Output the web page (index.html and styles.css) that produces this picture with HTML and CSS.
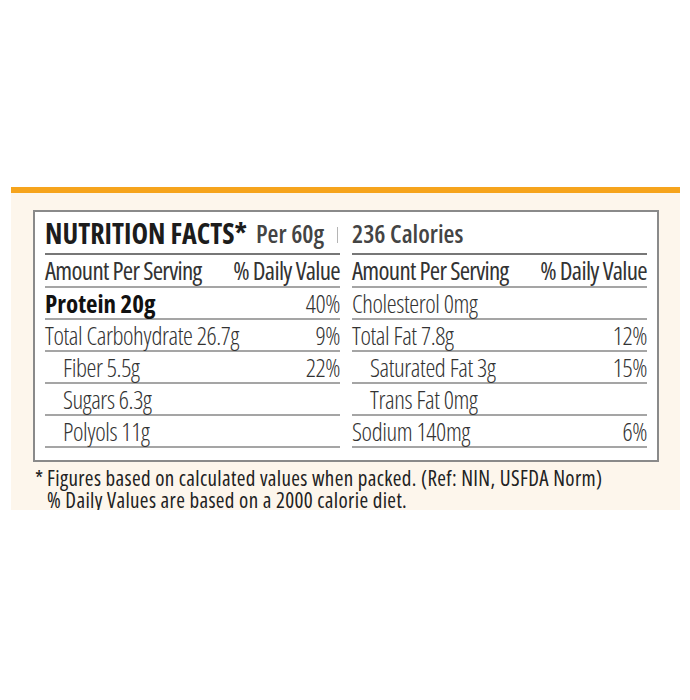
FILE: index.html
```html
<!DOCTYPE html>
<html>
<head>
<meta charset="utf-8">
<link rel="stylesheet" href="styles.css">
</head>
<body>
<div class="panel">
  <div class="box">
    <div class="col">
      <div class="title"><span class="big">NUTRITION FACTS*</span><span class="per">Per 60g</span><span class="sep"></span></div>
      <div class="row head"><span>Amount Per Serving</span><span>% Daily Value</span></div>
      <div class="row bold"><span>Protein 20g</span><span class="pct">40%</span></div>
      <div class="row"><span>Total Carbohydrate 26.7g</span><span>9%</span></div>
      <div class="row sub"><span>Fiber 5.5g</span><span>22%</span></div>
      <div class="row sub"><span>Sugars 6.3g</span><span></span></div>
      <div class="row sub"><span>Polyols 11g</span><span></span></div>
    </div>
    <div class="col">
      <div class="title"><span class="per">236 Calories</span></div>
      <div class="row head"><span>Amount Per Serving</span><span>% Daily Value</span></div>
      <div class="row"><span>Cholesterol 0mg</span><span></span></div>
      <div class="row"><span>Total Fat 7.8g</span><span>12%</span></div>
      <div class="row sub"><span>Saturated Fat 3g</span><span>15%</span></div>
      <div class="row sub"><span>Trans Fat 0mg</span><span></span></div>
      <div class="row"><span>Sodium 140mg</span><span>6%</span></div>
    </div>
  </div>
  <div class="note">
    <p><span class="star">*</span>Figures based on calculated values when packed. (Ref: NIN, USFDA Norm)</p>
    <p class="second">% Daily Values are based on a 2000 calorie diet.</p>
  </div>
</div>
</body>
</html>
```

FILE: styles.css
```css
* { box-sizing: border-box; }
body {
  margin: 0;
  background: #fff;
  font-family: "Open Sans", "Liberation Sans", sans-serif;
}
.panel {
  margin: 187px 0 0 11px;
  width: 669px;
  border-top: 6px solid #f6a41c;
  background: #fdf6ec;
  padding: 17px 21px 0 22px;
  height: 323px;
}
.box {
  width: 626px;
  border: 2px solid #8a8a8a;
  background: #fff;
  display: grid;
  grid-template-columns: 295px 295px;
  column-gap: 12px;
  padding: 0 10px 12px 10px;
}
.col { display: flex; flex-direction: column; }
.title {
  height: 43px;
  border-bottom: 2px solid #777;
  display: flex;
  align-items: flex-end;
  padding-bottom: 5px;
  font-stretch: 75%;
  position: relative;
  white-space: nowrap;
}
.big { font-weight: 700; font-size: 28px; color: #1c1c1c; line-height: 30px; }
.per { font-weight: 600; font-size: 25px; color: #444; line-height: 30px; margin-left: 9px; }
.col:last-child .per { margin-left: 0; }
.sep {
  position: absolute; right: 2px; bottom: 10px;
  width: 1px; height: 16px; background: #b5b5b5;
}
.row {
  height: 32px;
  border-bottom: 2px solid #a5a5a5;
  display: flex;
  justify-content: space-between;
  font-size: 25px;
  line-height: 30px;
  font-weight: 300;
  font-stretch: 75%;
  letter-spacing: -0.4px;
  color: #333;
  white-space: nowrap;
}
.head { height: 33px; font-weight: 400; letter-spacing: -0.7px; }
.bold { font-weight: 700; color: #111; letter-spacing: 0; }
.bold .pct { font-weight: 300; color: #333; letter-spacing: -0.4px; }
.sub span:first-child { padding-left: 18px; }
.note {
  font-size: 21px;
  font-stretch: 75%;
  font-weight: 400;
  color: #222;
  line-height: 22px;
  padding: 5px 0 0 2px;
  letter-spacing: 0.35px;
  white-space: nowrap;
}
.note p { margin: 0; }
.star { display: inline-block; width: 12px; }
.note .second { padding-left: 12px; }
```
